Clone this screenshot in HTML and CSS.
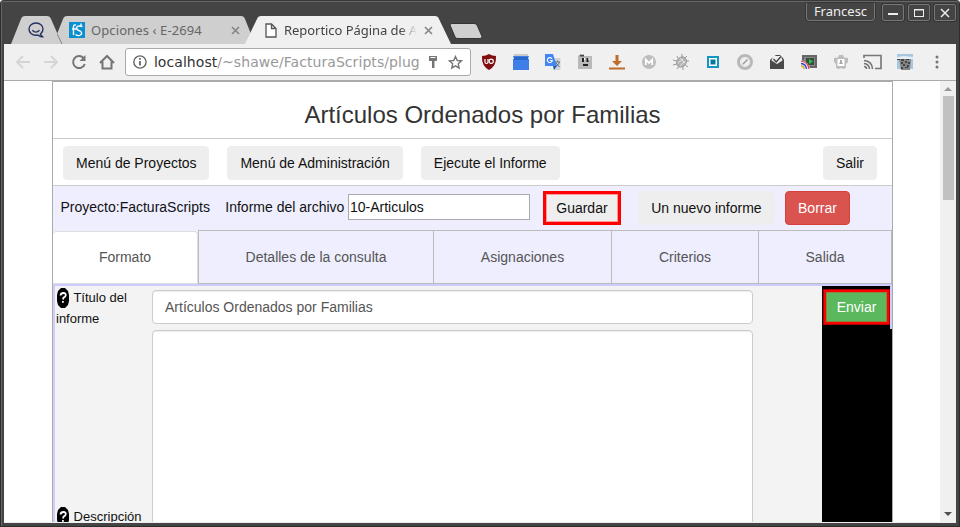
FILE: index.html
```html
<!DOCTYPE html>
<html lang="es">
<head>
<meta charset="utf-8">
<title>Reportico Página de Administración</title>
<link rel="stylesheet" href="styles.css">
</head>
<body>
<div class="window">
  <header class="titlebar">
    <div class="tabs">
      <div class="tab tab-pinned">
        <svg class="tab-shape" viewBox="0 0 51 28"><path d="M0 28 10 3Q11 0 14 0H36Q39 0 40 3L51 28Z"/></svg>
        <svg class="tab-icon" width="16" height="16" viewBox="0 0 16 16" fill="none" stroke="#26315f" stroke-width="1.4"><path d="M12.500 12Q15 10 15 7C15 3.500 12 1 8 1S1 3.500 1 7s3 6.200 7 6.200h2.500q1.500 1.800 4 1.500-1.600-1.300-2-2.700Z"/><path d="M4.300 8.300q3.500 3.600 7.200 0"/></svg>
      </div>
      <div class="tab tab-back">
        <svg class="tab-shape" viewBox="0 0 198 28"><path d="M5 28 0 18 6 3Q7 0 10 0H184Q187 0 188 3L198 28Z"/><path d="M0 17.500 5 28" stroke="#888" fill="none"/></svg>
        <svg class="tab-icon" width="16" height="16" viewBox="0 0 16 16"><path fill="#0c8fd0" d="M0 0h16v16H0z"/><path d="M4.500 13V4.500Q4.500 2.500 7 3M3 7h4M13.500 4.500Q7.500 3 7.500 6 7.500 8 11 9q3 2 .5 4-2.500 1.500-5-.5M12 1.500V4" fill="none" stroke="#fff" stroke-width="1.400"/></svg>
        <span class="tab-text">Opciones ‹ E-2694</span>
        <svg class="tab-close" width="9" height="9" viewBox="0 0 9 9"><path d="m1 1 7 7m0-7-7 7"/></svg>
      </div>
      <div class="tab tab-active">
        <svg class="tab-shape" viewBox="0 0 206 28"><path d="M0 28 12 3Q13 0 16 0H190Q193 0 194 3L206 28Z"/></svg>
        <svg class="tab-icon" width="12" height="15" viewBox="0 0 12 15" fill="#fff" stroke="#555" stroke-width="1.300"><path d="M1 1h5.500L11 5.500V14H1ZM6.500 1v4.500H11"/></svg>
        <span class="tab-text">Reportico Página de Ad</span>
        <svg class="tab-close" width="9" height="9" viewBox="0 0 9 9"><path d="m1 1 7 7m0-7-7 7"/></svg>
      </div>
      <svg class="new-tab" width="34" height="16" viewBox="0 0 34 16"><path d="M3 .5H25Q27 .5 28 2L33 13.500Q33 15.500 31 15.500H9Q7 15.500 6 14L1 2Q1 .5 3 .5Z" fill="#cfcfcf" stroke="#333"/></svg>
    </div>
    <div class="controls">
      <span class="user">Francesc</span>
      <span class="control"><svg width="12" height="10"><path d="M1 6h10" stroke="#eee" stroke-width="2"/></svg></span>
      <span class="control"><svg width="12" height="10" fill="none" stroke="#eee"><rect x="1.500" y="1.500" width="9" height="7"/><path d="M1 2h10"/></svg></span>
      <span class="control"><svg width="12" height="10"><path d="m2 1 8 8m0-8-8 8" stroke="#eee" stroke-width="1.500"/></svg></span>
    </div>
  </header>

  <nav class="toolbar">
    <svg class="nav-icon off" width="16" height="16" viewBox="0 0 16 16"><path d="M15 8H2M8 2 2 8l6 6"/></svg>
    <svg class="nav-icon off" width="16" height="16" viewBox="0 0 16 16"><path d="M1 8h13M8 2l6 6-6 6"/></svg>
    <svg class="nav-icon" width="16" height="16" viewBox="0 0 16 16"><path d="M12.500 4A6 6 0 1 0 13.800 10"/><path d="M14.500 1v6h-6Z" fill="#757575" stroke="none"/></svg>
    <svg class="nav-icon" width="16" height="16" viewBox="0 0 16 16"><path d="M1 9 8 2l7 7M3.500 7.500V14.500h9V7.500"/></svg>
    <div class="address">
      <svg width="14" height="14" viewBox="0 0 14 14" fill="none" stroke="#666"><circle cx="7" cy="7" r="6.200" stroke-width="1.400"/><path d="M7 6v4.500M7 3v1.700" stroke-width="1.800"/></svg>
      <span class="url"><b>localhost</b>/~shawe/FacturaScripts/plug</span>
      <svg class="key" width="10" height="14" viewBox="0 0 10 14" fill="#757575"><path d="M1 1h8v5H6.500v7H4V6H1Z"/><path d="M2.500 2.500h5" stroke="#fff"/></svg>
      <svg width="15" height="15" viewBox="0 0 15 15" fill="none" stroke="#757575" stroke-width="1.400"><path d="m7.500 1.500 1.800 4 4.200.4-3.200 2.900.9 4.200-3.700-2.200L3.800 13l.9-4.200L1.500 5.900l4.200-.4Z"/></svg>
    </div>
    <div class="extensions">
      <svg viewBox="0 0 16 16"><path d="M8 0q3 2 7 2 .6 10-7 14Q.4 12 1 2q4 0 7-2Z" fill="#810d10"/><path d="M4 5v3q0 1.500 1.500 1.500T7 8V5" fill="none" stroke="#fff" stroke-width="1.200"/><circle cx="10.200" cy="7.300" r="2.100" fill="none" stroke="#fff" stroke-width="1.200"/></svg>
      <svg viewBox="0 0 16 16"><path d="M1 0h14v4H1z" fill="#c9c9c9"/><path d="M0 2h16l-1 3h1v11H0V5h1Z" fill="#3f7de8"/><path d="M1 3h14v3H1z" fill="#2966ca"/></svg>
      <svg viewBox="0 0 16 16"><path d="M6 4h9.500v12H9Z" fill="#cfd4d8"/><path d="M0 0h8l4 12H0Z" fill="#4285f4"/><path d="m9 16 3-4H8Z" fill="#255bb5"/><path d="M7 4.800A2.500 2.500 0 1 0 7.300 6.500H5" fill="none" stroke="#fff" stroke-width="1.200"/><path d="M10 8h5M12.500 6.500V8m2 0q-1 3-3 4m-.5-3 3.500 4" stroke="#637782" fill="none"/></svg>
      <svg viewBox="0 0 16 16"><path d="M1 2 3 0h4v2h8v13H1Z" fill="#b9b9b9"/><path d="M3 1h4v1.500H3z" fill="#444"/><path d="M5 4h2v4H5zM9.500 4h2v4h-2zM6 10h5v2H6z" fill="#222"/><path d="M7 4h1v2H7zm4.500 0h1v2h-1z" fill="#fff"/></svg>
      <svg viewBox="0 0 16 16"><path d="M6.500 1h3v6H13l-5 5-5-5h3.500ZM0 13.500h16v2H0z" fill="#bd6d29"/></svg>
      <svg viewBox="0 0 16 16"><circle cx="8" cy="8" r="7" fill="#bdbdbd"/><path d="M4.800 11V5.500L8 9l3.200-3.500V11" fill="none" stroke="#fff" stroke-width="1.800"/></svg>
      <svg viewBox="0 0 16 16"><path d="m4 2 2 4M9 0v4m5-2-3 3m5 2h-4m3 6-4-3m-1 6v-4M4 15l2-3M0 11l4-1M0 6l4 1" stroke="#999" fill="none"/><ellipse cx="8.500" cy="8" rx="4.700" ry="5.500" transform="rotate(40 8.500 8)" fill="#b5b5b5" stroke="#888" stroke-width=".6"/><path d="m7 4 5 5M5 9l5-4m-3 7 5-5" stroke="#eee" stroke-width=".8"/></svg>
      <svg viewBox="0 0 16 16"><rect x="3" y="3" width="10" height="10" fill="#fff" stroke="#1495c5" stroke-width="2"/><path d="M5.500 5.500h5v5h-5z" fill="#08779f"/></svg>
      <svg viewBox="0 0 16 16"><circle cx="8" cy="8" r="6.500" fill="#eee" stroke="#b8b8b8" stroke-width="3"/><path d="m5 11 1-2 4-4 1 1-4 4Z" fill="#999"/></svg>
      <svg viewBox="0 0 16 16"><path d="M1 6 3 4l4-3h4l3 3 1 2v9H1Z" fill="#4a4a4a"/><path d="M2.500 6.500 4 2h8l1.500 4.500L8 10Z" fill="#eee"/><path d="m4.500 5 2.700 3L12 2.500" fill="none" stroke="#444" stroke-width="1.400"/></svg>
      <svg viewBox="0 0 16 16"><path d="M2 2h13v11H2z" fill="#888" stroke="#666" stroke-width="2"/><path d="M5 4h8v7H5z" fill="#3c4c40"/><path d="m8 5 4 2.500L8 10Z" fill="#20cc45"/><path d="M0 6v9h9q-1-7-9-9Z" fill="#eee"/><path d="M0 7q7 1 8 8" stroke="#e03434" fill="none" stroke-width="1.100"/><path d="M0 9.500q5 .5 5.500 5.500" stroke="#3545cc" fill="none" stroke-width="1.400"/><path d="M0 12q3 0 3 3" stroke="#d8ae20" fill="none" stroke-width="1.400"/></svg>
      <svg viewBox="0 0 16 16"><path d="M6 1h4l1 2.500 4 .5v4l-2 2v4l-3 1-2-1-2 1-3-1v-4L1 8V4l4-.5Z" fill="#bcbcbc"/><path d="M4.500 5h7v7h-7z" fill="#fff"/><path d="M7 6h2v2l1 2H6l1-2Z" fill="#aaa"/></svg>
      <svg viewBox="0 0 19 16" class="cast" fill="none" stroke="#757575" stroke-width="1.600"><path d="M1 4V1.500h17v13h-6M1 6.500q8 .5 8.500 8.500M1 9.500q5 .5 5.500 5.500M1 12.500q2.500 0 2.500 2.500"/></svg>
      <svg viewBox="0 0 16 16"><path d="M0 0h16v15H0z" fill="#a9c6df"/><path d="M0 3 7 2l9 1v2H0z" fill="#e6edf3"/><path d="M2 5h12l-1 11H4Z" fill="#858585"/><path d="M0 5h3v1H0zm4 0h3v2H4zm5 0h3v1H9zM4 8h2v2H4zm4-1h2v2H8zm3 1h2v2h-2zM6 10h2v2H6zm4 1h2v2h-2zM4 13h2v2H4zm4 0h3v1H8z" fill="#444"/></svg>
    </div>
    <svg class="menu-dots" width="4" height="14" viewBox="0 0 4 14" fill="#757575"><circle cx="2" cy="2" r="1.500"/><circle cx="2" cy="7" r="1.500"/><circle cx="2" cy="12" r="1.500"/></svg>
  </nav>

  <div class="viewport">
    <main class="report">
      <h1>Artículos Ordenados por Familias</h1>
      <div class="admin-menu">
        <button class="btn projects">Menú de Proyectos</button>
        <button class="btn">Menú de Administración</button>
        <button class="btn">Ejecute el Informe</button>
        <button class="btn exit">Salir</button>
      </div>
      <div class="project-bar">
        <span class="project">Proyecto:FacturaScripts</span>
        <label for="file">Informe del archivo</label>
        <input id="file" class="file" value="10-Articulos">
        <span class="marked save"><button class="btn">Guardar</button></span>
        <button class="btn new-report">Un nuevo informe</button>
        <button class="btn danger">Borrar</button>
      </div>
      <div class="sections">
        <a class="section current">Formato</a>
        <a class="section details">Detalles de la consulta</a>
        <a class="section assign">Asignaciones</a>
        <a class="section criteria">Criterios</a>
        <a class="section output">Salida</a>
      </div>
      <div class="form">
        <div class="fields">
          <div class="row">
            <div class="name"><svg class="help" width="14" height="20" viewBox="0 0 14 20"><path d="M5 0h4l3 3 1 4v6l-1 4-3 3H5l-3-3-1-4V7l1-4Z"/><path d="M4.500 7.500Q4.800 5 7.500 5 10 5 9.700 7.500 9.500 9 7.500 9.700L7 11.500M6.900 13v1.800" fill="none" stroke="#fff" stroke-width="1.800"/></svg> Título del informe</div>
            <input class="text" value="Artículos Ordenados por Familias">
          </div>
          <div class="row description">
            <div class="name"><svg class="help" width="14" height="20" viewBox="0 0 14 20"><path d="M5 0h4l3 3 1 4v6l-1 4-3 3H5l-3-3-1-4V7l1-4Z"/><path d="M4.500 7.500Q4.800 5 7.500 5 10 5 9.700 7.500 9.500 9 7.500 9.700L7 11.500M6.900 13v1.800" fill="none" stroke="#fff" stroke-width="1.800"/></svg> Descripción</div>
            <div class="area"></div>
          </div>
        </div>
        <div class="submit"><span class="marked send"><button class="btn">Enviar</button></span><i class="edge"></i></div>
      </div>
    </main>
    <div class="scrollbar">
      <svg width="8" height="4"><path d="M0 4 4 0l4 4Z" fill="#999"/></svg>
      <div class="thumb"></div>
      <svg class="down" width="8" height="4"><path d="m0 0 4 4 4-4Z" fill="#505050"/></svg>
    </div>
  </div>
</div>
</body>
</html>
```
FILE: styles.css
```css
* { box-sizing: border-box; }
body { margin: 0; background: #fff; overflow: hidden; }
.window {
  display: flex;
  flex-direction: column;
  width: 960px;
  height: 527px;
  padding: 0 3px 3px;
  background: #444;
  border: 1px solid #2d2d2d;
  border-top-color: #383838;
  border-radius: 4px 4px 0 0;
  box-shadow: inset 0 1px #666, inset 1px 0 #666;
}
.titlebar { display: flex; justify-content: space-between; height: 43px; flex: none; }
.tabs { display: flex; align-items: flex-end; padding-left: 7px; }
.tab { display: flex; position: relative; align-items: center; height: 28px; }
.tab-shape { position: absolute; left: 0; top: 0; width: 100%; height: 100%; fill: #cfcfcf; }
.tab-icon, .tab-text, .tab-close { position: relative; flex: none; }
.tab-pinned { width: 51px; justify-content: center; }
.tab-pinned .tab-icon { left: -1px; }
.tab-back { width: 198px; margin-left: -5px; padding-left: 12px; }
.tab-active { width: 206px; margin-left: -10px; padding-left: 20px; }
.tab-active .tab-shape { fill: #f0f0f0; }
.tab-text { font: 13px/18px "Noto Sans", sans-serif; color: #666; white-space: nowrap; overflow: hidden; }
.tab-back .tab-text { width: 140px; margin-left: 6px; letter-spacing: .1px; }
.tab-active .tab-text { width: 133px; margin-left: 7px; color: #444; letter-spacing: -.05px; -webkit-mask-image: linear-gradient(to right, #000 116px, transparent); mask-image: linear-gradient(to right, #000 116px, transparent); }
.tab-close { margin-left: 0; stroke: #858585; stroke-width: 1.6; }
.tab-active .tab-close { margin-left: 7px; }
.new-tab { margin: 0 0 5px -2px; }
.controls { display: flex; align-items: flex-start; padding: 2px 0 0; gap: 4px; }
.user, .control { border: 1px solid #777; border-radius: 2px; box-shadow: 0 0 0 1px #353535; background: #444; }
.user { width: 69px; height: 18px; margin-right: 3px; border-top: 0; border-radius: 0 0 4px 4px; color: #eee; font: 13px/17px "Noto Sans", sans-serif; text-align: center; }
.control { display: flex; align-items: center; justify-content: center; width: 22px; height: 17px; margin-top: 1px; }

.toolbar { display: flex; align-items: center; flex: none; height: 37px; padding-left: 11px; background: #f0f0f0; border-bottom: 1px solid #aaa; }
.nav-icon { margin-right: 12px; fill: none; stroke: #757575; stroke-width: 2; }
.off { stroke: #d5d5d5; }
.address { display: flex; align-items: center; width: 346px; height: 28px; margin-left: -2px; padding: 0 7px; background: #fff; border: 1px solid #aaa; border-radius: 3px; }
.url { width: 268px; margin-left: 7px; overflow: hidden; color: #999; font: 14px/20px "DejaVu Sans", sans-serif; letter-spacing: .06px; white-space: nowrap; }
.url b { color: #333; font-weight: 400; }
.key { margin: 0 10px 0 8px; }
.extensions { display: flex; gap: 16px; margin-left: 10px; }
.extensions svg { width: 16px; height: 16px; }
.extensions .cast { width: 19px; margin: 0 -1px 0 -2px; }
.menu-dots { margin-left: 22px; }

.viewport { display: flex; flex: 1; min-height: 0; overflow: hidden; background: #fff; border-bottom: 1px solid #eee; }
.report { display: flex; flex-direction: column; width: 841px; margin-left: 48px; border: 1px solid #aaa; border-bottom: 0; font: 14px/20px "Liberation Sans", sans-serif; color: #111; }
h1 { flex: none; height: 57px; margin: 0; padding: 6px 0 0 20px; border-bottom: 1px solid #ccc; color: #333; font-size: 24px; font-weight: 400; line-height: 54px; text-align: center; }
.btn { height: 34px; padding: 0 12px; background: #eee; border: 1px solid #eee; border-radius: 4px; color: #111; font: 14px/20px "Liberation Sans", sans-serif; white-space: nowrap; }
.admin-menu { display: flex; flex: none; gap: 18px; height: 47px; padding: 7px 15px 0 10px; border-bottom: 1px solid #ccc; }
.projects { width: 146.4px; }
.exit { margin-left: auto; }
.project-bar { display: flex; flex: none; align-items: center; height: 44px; padding-left: 7.5px; background: #eef; }
.project { margin-right: 15.4px; }
.project, .project-bar label { padding-bottom: 2px; }
.file { width: 182px; height: 26px; margin: -2px 13px 0 3.6px; padding: 0 1px; border: 1px solid #aaa; background: #fff; color: #111; font: 14px "Liberation Sans", sans-serif; }
.marked { display: flex; }
.save { width: 78px; height: 34px; border: 3px solid #f00; outline: 1px solid rgba(255,0,0,.4); outline-offset: -1px; box-shadow: inset 0 0 0 1px #f99; }
.save .btn, .send .btn { flex: 1; height: auto; padding: 0; border-radius: 0; }
.save .btn { margin: 1px; border: 0; }
.new-report { margin: 0 10.4px 0 17.2px; }
.danger { background: #d9534f; border-color: #d43f3a; color: #fff; }
.sections { display: flex; flex: none; height: 54px; background: #eef; }
.section { display: flex; align-items: center; justify-content: center; border: 1px solid #bbb; border-left: 0; color: #555; }
.current { width: 145px; margin-top: 1px; padding-bottom: 2px; background: #fff; border-color: #ddd; border-radius: 4px 4px 0 0; }
.details { width: 236px; border-left: 1px solid #bbb; }
.assign { width: 178px; }
.criteria { width: 147px; }
.output { flex: 1; }
.form { display: flex; flex: 1; min-height: 0; background: #f3f3f3; border: solid #ccf; border-width: 2px 0 0 2px; }
.fields { flex: 1; padding: 4px 0 0 1px; }
.row { display: flex; height: 40px; }
.name { width: 96px; padding-right: 20px; font-size: 13px; line-height: 21px; margin-top: -3px; }
.help { margin-top: 1px; vertical-align: -6px; }
.text, .area { width: 601px; background: #fff; border: 1px solid #ccc; border-radius: 4px; box-shadow: inset 0 1px 1px rgba(0,0,0,.075); }
.text { height: 34px; padding: 0 12px; color: #555; font: 14px "Liberation Sans", sans-serif; }
.description { height: 374px; }
.description .name { align-self: center; padding-right: 0; margin-top: -2px; }
.submit { display: flex; align-items: flex-start; width: 70px; background: #000; }
.send { width: 67px; height: 36px; margin: 3px 0 0 1px; border: 3px solid #f00; outline: 1px solid #a00; outline-offset: -1px; }
.send .btn { background: #5cb85c; border: 1px solid #8a8540; color: #fff; }
.edge { width: 2px; height: 43px; background: #ccf; }
.scrollbar { display: flex; flex-direction: column; align-items: center; width: 16px; margin-left: auto; padding: 6px 0 6px; background: #f0f0f0; }
.scrollbar svg { flex: none; }
.thumb { flex: none; width: 11px; height: 104px; margin-top: 5px; background: #c1c1c1; }
.down { margin-top: auto; }
```
